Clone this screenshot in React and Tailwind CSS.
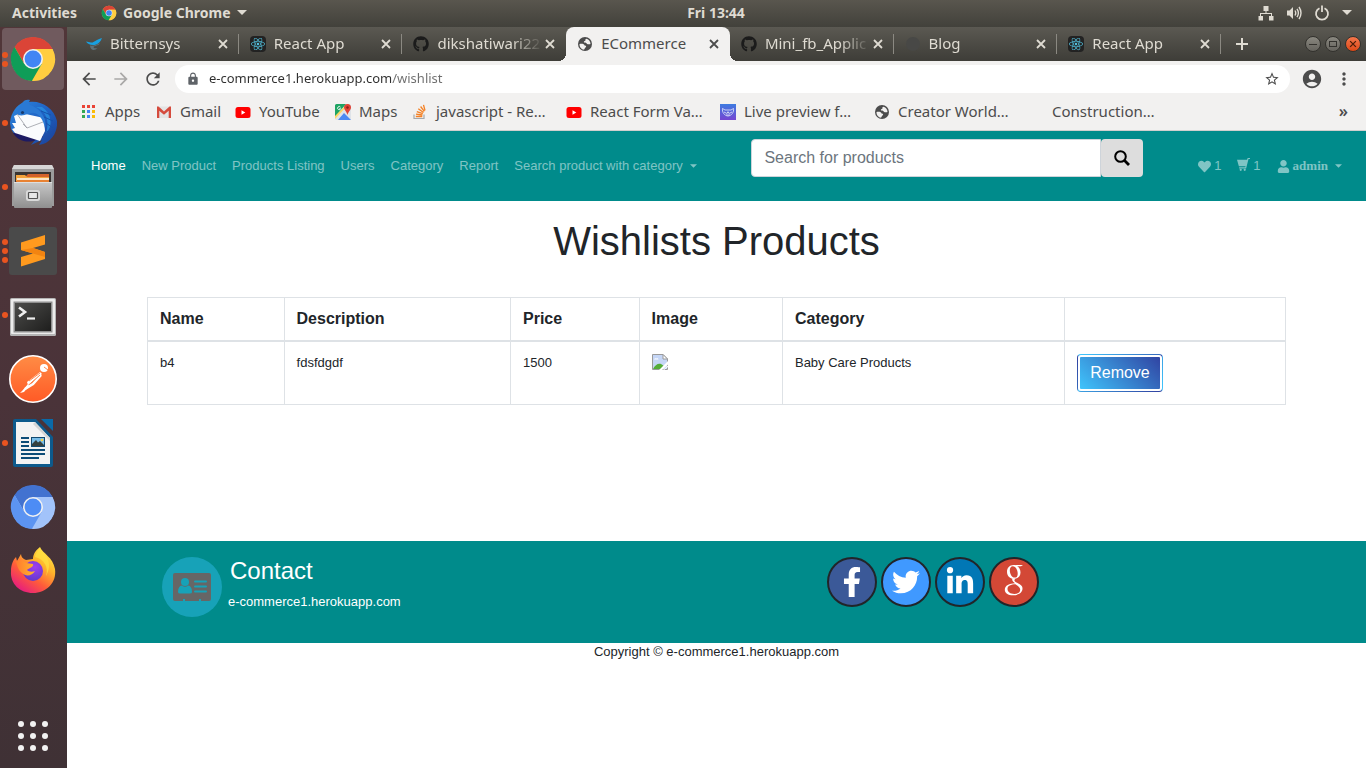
import React from "react";
import { FaFacebookF, FaTwitter, FaLinkedinIn, FaGithub, FaReact, FaHeart, FaUser } from "react-icons/fa";
import {
  MdArrowBack,
  MdArrowForward,
  MdRefresh,
  MdLock,
  MdStarBorder,
  MdAccountCircle,
  MdMoreVert,
} from "react-icons/md";

/* ---------- Logos ---------- */

function ChromeLogo({ className, top = "#db4437", right = "#ffcd40", left = "#0f9d58", core = "#4285f4" }) {
  const blade = "M9.8-5A11 11 0 0 0-9.23-5.99L-4.33 2.5L0-5Z";
  return (
    <svg viewBox="-12 -12 24 24" className={className} aria-hidden="true">
      <circle r="10.8" fill={right} />
      <path d={blade} fill={top} />
      <path d={blade} fill={right} transform="rotate(120)" />
      <path d={blade} fill={left} transform="rotate(240)" />
      <circle r="5" fill="#f1f1f1" />
      <circle r="4.2" fill={core} />
    </svg>
  );
}

function Thunderbird() {
  return (
    <svg viewBox="0 0 48 48" className="size-12" aria-hidden="true">
      <defs>
        <linearGradient id="tb" x1="0" y1="0" x2="1" y2="1">
          <stop offset="0" stopColor="#2f8be0" />
          <stop offset="0.5" stopColor="#1f62c4" />
          <stop offset="1" stopColor="#1a3f96" />
        </linearGradient>
      </defs>
      <path d="M1 24C2 12 9 6 13 4C15 1 18 0 21 1L20 3C32 1 45 9 48 22C49 32 43 42 34 45L30 46L33 41L22 46L26 41C15 42 5 37 2 30Z" fill="url(#tb)" />
      <path d="M4 34C8 41 18 45 27 41L34 38L30 30Z" fill="#1d1a63" />
      <path d="M5 17L12 14L35 19L36 32L31 42L6 34L3 30L6 29L3 24L7 24Z" fill="#fafbfd" />
      <path d="M8 15L18 29L34 23M18 29L14 25" fill="none" stroke="#9a9da5" strokeWidth="0.8" />
      <path d="M13 4C10 8 10 13 9 16C16 18 20 13 25 14C30 15 34 20 36 29C38 23 34 13 27 9C21 5 19 6 20 3Z" fill="#2a79d4" />
      <path d="M27 8C37 12 41 22 37 34C45 27 42 14 33 8Z" fill="#2a9be8" opacity="0.6" />
      <path d="M32 12L42 16M35 18L44 22M37 24L44 29M36 31L42 35" stroke="#1552aa" strokeWidth="1" />
      <circle cx="13.500" cy="13.500" r="1.600" fill="#173a6e" />
    </svg>
  );
}

function FilesIcon() {
  return (
    <svg viewBox="0 0 48 48" className="size-12" aria-hidden="true">
      <defs>
        <linearGradient id="fi" x1="0" y1="0" x2="0" y2="1">
          <stop offset="0" stopColor="#c8c8c8" />
          <stop offset="1" stopColor="#8f8f8f" />
        </linearGradient>
      </defs>
      <path d="M5 2h38l2 4v37H3V6Z" fill="#9c9c9c" />
      <path d="M5 2h38l2 4H3Z" fill="#d6d6d6" />
      <rect x="6" y="9" width="36" height="11" fill="#3a3431" />
      <path d="M7 13h10l2-2h21v8H7Z" fill="#d3622b" />
      <path d="M7 12h9l2 2h22v4H7Z" fill="#f4a33b" />
      <path d="M8 15h32v3H8Z" fill="#fce4c5" />
      <path d="M8 17h32v3H8Z" fill="#e88233" />
      <rect x="5" y="19" width="38" height="26" rx="1" fill="url(#fi)" />
      <path d="M5 19.500h38" stroke="#dedede" />
      <rect x="17" y="27" width="14" height="11" rx="2.500" fill="#dadada" />
      <rect x="19.500" y="29.500" width="9" height="6" rx="0.500" fill="#e8e8e8" stroke="#555" strokeWidth="1.200" />
    </svg>
  );
}

function SublimeIcon() {
  return (
    <svg viewBox="0 0 48 48" className="size-12" aria-hidden="true">
      <rect width="48" height="48" rx="3" fill="#4a4a4a" />
      <path d="M36 8V17.500L24 21L36 25V32L12 39.500V30L24 26.500L12 23V15.500Z" fill="#ff9a1e" />
      <path d="M12 23L24 21L36 25L36 30L24 26.500Z" fill="#f28411" />
    </svg>
  );
}

function TerminalIcon() {
  return (
    <svg viewBox="0 -2 48 48" className="size-12" aria-hidden="true">
      <defs>
        <linearGradient id="term" x1="0" y1="0" x2="1" y2="1">
          <stop offset="0" stopColor="#4c4c4a" />
          <stop offset="1" stopColor="#1e1e1d" />
        </linearGradient>
      </defs>
      <rect x="1" y="5" width="46" height="38" rx="1.500" fill="#b4b4b4" />
      <rect x="2" y="6" width="44" height="35" rx="1" fill="#ececec" />
      <rect x="4.500" y="8.500" width="39" height="31" fill="#8e8e8e" />
      <rect x="6" y="10" width="36" height="28" fill="url(#term)" />
      <path d="M10 14.500l6 4.500l-6 4.500" fill="none" stroke="#eee" strokeWidth="2.600" />
      <path d="M18 25.500h8" stroke="#eee" strokeWidth="2.200" />
    </svg>
  );
}

function PostmanIcon() {
  return (
    <svg viewBox="0 0 48 48" className="size-12" aria-hidden="true">
      <defs>
        <linearGradient id="pm" x1="0" y1="0" x2="0" y2="1">
          <stop offset="0" stopColor="#ff8c45" />
          <stop offset="1" stopColor="#ff5a26" />
        </linearGradient>
      </defs>
      <circle cx="24" cy="24" r="23.200" fill="url(#pm)" stroke="#fff" strokeWidth="1.600" />
      <circle cx="35" cy="13" r="4" fill="#fff" />
      <path d="M31 17L18 27L19 30L33 19Z" fill="#fff" />
      <path d="M32 20L24 29L16 34" fill="none" stroke="#fff" strokeWidth="2.600" />
      <path d="M19 29L13 36L11 38L15 37L20 31" fill="#fff" />
      <path d="M20 26L31 18M22 28L31 20M35 12l4 3" stroke="#ff7a3a" strokeWidth="0.900" />
    </svg>
  );
}

function WriterIcon() {
  return (
    <svg viewBox="0 0 48 48" className="size-12" aria-hidden="true">
      <path d="M6 0H27L44 18V46a2 2 0 0 1-2 2H6a2 2 0 0 1-2-2V2a2 2 0 0 1 2-2Z" fill="#0d5a8c" />
      <path d="M32 0H44V12Z" fill="#0a6aa8" />
      <path d="M7 3H26L41 19V45H7Z" fill="#f3f3f3" />
      <path d="M26 3L41 19V22L24 5Z" fill="#d4d4d4" />
      <path d="M12 19h8M12 23h8M12 27h8M12 31h24M12 35h24M12 39h18" stroke="#0c4c77" strokeWidth="1.900" />
      <rect x="22.500" y="18.500" width="13" height="9" fill="#79bde8" stroke="#124a70" />
      <path d="M23 27v-2l4-4l2 2.500l2-1.500l4 4v1Z" fill="#34403f" />
      <circle cx="33" cy="21" r="1.300" fill="#f5cf45" />
    </svg>
  );
}

function FirefoxIcon() {
  return (
    <svg viewBox="0 0 48 48" className="size-12" aria-hidden="true">
      <defs>
        <linearGradient id="ff1" x1="0.9" y1="0" x2="0.2" y2="1">
          <stop offset="0" stopColor="#fff44f" />
          <stop offset="0.350" stopColor="#ffb52b" />
          <stop offset="0.650" stopColor="#ff5b3a" />
          <stop offset="1" stopColor="#e31587" />
        </linearGradient>
        <radialGradient id="ff2" cx="0.6" cy="0.3" r="0.8">
          <stop offset="0" stopColor="#a03ff0" />
          <stop offset="1" stopColor="#5a38c8" />
        </radialGradient>
        <linearGradient id="ff3" x1="0" y1="0" x2="1" y2="0">
          <stop offset="0" stopColor="#ff7a30" />
          <stop offset="1" stopColor="#ffb52b" />
        </linearGradient>
      </defs>
      <path d="M31 0C34 7 44 10 46 22C48 36 37 46 24 46C11 46 1 37 2 24C2 18 4 13 7 10L8 14L12 7C12 10 14 12 17 13L24 12C24 7 27 3 31 0Z" fill="url(#ff1)" />
      <circle cx="24" cy="24" r="10" fill="url(#ff2)" />
      <path d="M7 14C12 12 15 14 17 16L24 17C25 20 20 21 18 23C20 25 23 25 26 24C23 29 17 30 13 26C9 23 8 18 7 14Z" fill="url(#ff3)" />
      <path d="M26 10C35 12 40 20 37 29C40 24 42 16 37 9L31 2C28 5 26 7 26 10Z" fill="#ffe141" opacity="0.700" />
    </svg>
  );
}

function AppsGridIcon() {
  return (
    <svg viewBox="0 0 48 48" className="size-12" fill="#f2f2f2" aria-hidden="true">
      {[12, 24, 36].map((y) => [12, 24, 36].map((x) => <circle key={x + "-" + y} cx={x} cy={y} r="3" />))}
    </svg>
  );
}

function BitternsysIcon() {
  return (
    <svg viewBox="0 0 16 16" className="size-4" aria-hidden="true">
      <path d="M0 5.500L5 6.500C8 7 9 4 16 2C14.500 6 12 8.500 8.500 9C4.500 9.500 1.500 8 0 5.500Z" fill="#18a0e0" />
      <path d="M4 9.500C7 10 11 9 14 7C13 9.500 10 9.500 8 10.500C6.500 11.500 9 13 11.500 12C8.500 15.500 4 14 4 9.500Z" fill="#5d7078" />
    </svg>
  );
}

function ReactFavicon() {
  return (
    <span className="flex size-4 items-center justify-center rounded-sm bg-[#222]">
      <FaReact className="size-3.5 text-[#53c1de]" aria-hidden="true" />
    </span>
  );
}

function GlobeIcon({ className }) {
  return (
    <svg viewBox="0 0 16 16" className={className} aria-hidden="true">
      <circle cx="8" cy="8" r="7" fill="currentColor" />
      <path d="M2.500 8C5 7.500 7.500 8 7.500 9.500C8.500 9.500 9.500 10 9 11C8 11.300 8 12.500 7 13.800C4.500 13.500 2.300 11 2.500 8Z" fill="#f2f1f0" />
      <path d="M9.500 2.700C8.500 3 8 4 8.500 4.800C7.500 5 6.500 5.500 7 6.500C8.500 6.300 9.500 6.800 10 8C11 8.300 12.500 8.500 13.500 8C13.500 5.500 12 3.300 9.500 2.700Z" fill="#f2f1f0" />
    </svg>
  );
}

function GmailIcon() {
  return (
    <svg viewBox="0 0 16 16" className="size-4" aria-hidden="true">
      <rect x="1" y="2.500" width="14" height="11.500" rx="1" fill="#e4e4e4" />
      <path d="M1 14V2.500H2.500L8 7.500L13.500 2.500H15V14h-2.300V6.800L8 10.800L3.300 6.800V14Z" fill="#d54b3d" />
    </svg>
  );
}

function YoutubeIcon() {
  return (
    <svg viewBox="0 0 16 16" className="size-4" aria-hidden="true">
      <rect x="0.500" y="3" width="15" height="11" rx="2.500" fill="#f00" />
      <path d="M6.500 6.300v4.400L10.300 8.500Z" fill="#fff" />
    </svg>
  );
}

function MapsIcon() {
  return (
    <svg viewBox="0 0 16 16" className="size-4" aria-hidden="true">
      <rect width="16" height="16" rx="1.500" fill="#dfe3e8" />
      <path d="M0 1.500A1.500 1.500 0 0 1 1.500 0H11L0 13Z" fill="#1fa463" />
      <path d="M3 16L9 9L16 16Z" fill="#4a89f3" />
      <path d="M0 12L12 0H14L0 15Z" fill="#fdd663" />
      <path d="M12.500 0A3.500 3.500 0 0 1 16 3.500C16 6 13 8 12.500 11C12 8 9 6 9 3.500A3.500 3.500 0 0 1 12.500 0Z" fill="#e04335" />
      <circle cx="12.500" cy="3.500" r="1.200" fill="#8c2018" />
      <path d="M5.500 3.200A1.600 1.600 0 1 0 5.700 4.700H4.300" fill="none" stroke="#fff" strokeWidth="0.900" />
    </svg>
  );
}

function StackIcon() {
  return (
    <svg viewBox="0 0 16 16" className="size-4" fill="none" aria-hidden="true">
      <path d="M2 10.500V14.500H12V10.500" stroke="#a5a8ab" strokeWidth="1.200" />
      <path d="M3.800 12.500H10.300M4 10.200L10.400 11M4.800 7.600L10.800 9.700M6.300 4.800L11.500 8.500M8.600 2.500L12.300 7.400M11.500 0.800L13 6.500" stroke="#f48024" strokeWidth="1.300" />
    </svg>
  );
}

function PreviewIcon() {
  return (
    <svg viewBox="0 0 16 16" className="size-4" aria-hidden="true">
      <defs>
        <linearGradient id="pv" x1="0" y1="0" x2="0" y2="1">
          <stop offset="0" stopColor="#3e7be0" />
          <stop offset="1" stopColor="#7546d2" />
        </linearGradient>
      </defs>
      <rect width="16" height="16" fill="url(#pv)" />
      <path d="M2.500 4.500L5 6H11L13.500 4.500C14 8 12 11.500 8 12C4 11.500 2 8 2.500 4.500ZM4 8l3 1.500M12 8L9 9.500M6 11h4" fill="none" stroke="#d7def8" strokeWidth="0.900" />
      <circle cx="8" cy="8.500" r="1" fill="#d7def8" />
    </svg>
  );
}

function AppsIcon() {
  const colors = ["#ea4335", "#ea4335", "#ea4335", "#34a853", "#4285f4", "#fbbc05", "#34a853", "#4285f4", "#fbbc05"];
  return (
    <svg viewBox="0 0 16 16" className="size-4" aria-hidden="true">
      {colors.map((c, i) => (
        <rect key={i} x={1 + (i % 3) * 5} y={1 + Math.floor(i / 3) * 5} width="3" height="3" fill={c} />
      ))}
    </svg>
  );
}

function CrossIcon({ className }) {
  return (
    <svg viewBox="0 0 14 14" className={className} fill="none" stroke="currentColor" strokeWidth="1.8" aria-hidden="true">
      <path d="M3 3L11 11M11 3L3 11" />
    </svg>
  );
}

/* ---------- Desktop ---------- */

function Caret({ className }) {
  return (
    <svg viewBox="0 0 10 5" className={className} fill="currentColor" aria-hidden="true">
      <path d="M0 0h10L5 5Z" />
    </svg>
  );
}

function TopBar() {
  return (
    <header className="grid h-[27px] grid-cols-[1fr_auto_1fr] items-center bg-linear-to-b from-[#59564e] to-[#42413b] pr-3.5 pb-0.5 pl-3 text-sm font-bold text-[#dfdbd2]">
      <div className="flex items-center gap-6">
        <button type="button">Activities</button>
        <button type="button" className="flex items-center gap-1.5">
          <ChromeLogo className="size-4" />
          Google Chrome
          <Caret className="h-[5px] w-2.5" />
        </button>
      </div>
      <button type="button" className="pl-[68px]">Fri 13:44</button>
      <div className="flex items-center justify-end gap-3">
        <svg viewBox="0 0 16 16" className="size-4" fill="currentColor" aria-label="Network">
          <path d="M5.500 1h5v5h-2v2h5.500v3h1.500v4.500H11V11h2V9H3v2h2v4.500H.5V11H2V8h5.500V6h-2Z" />
        </svg>
        <svg viewBox="0 0 16 16" className="size-4" aria-label="Volume">
          <path d="M1 5.500h2.500L7 2v12L3.500 10.500H1Z" fill="currentColor" />
          <path d="M9 5.500q1.500 2.500 0 5M11 3.800q2.800 4.200 0 8.400M13 2q4 6 0 12" fill="none" stroke="currentColor" strokeWidth="1.400" />
        </svg>
        <svg viewBox="0 0 16 16" className="size-4" fill="none" stroke="currentColor" strokeWidth="1.800" aria-label="Power">
          <path d="M5.500 3.200a6 6 0 1 0 5 0M8 .5v6.500" />
        </svg>
        <Caret className="h-[5px] w-2.5" />
      </div>
    </header>
  );
}

const dockApps = [
  { name: "Google Chrome", dots: 2, active: true, icon: <ChromeLogo className="size-12" /> },
  { name: "Thunderbird Mail", dots: 1, icon: <Thunderbird /> },
  { name: "Files", dots: 1, icon: <FilesIcon /> },
  { name: "Sublime Text", dots: 3, icon: <SublimeIcon /> },
  { name: "Terminal", dots: 1, icon: <TerminalIcon /> },
  { name: "Postman", dots: 0, icon: <PostmanIcon /> },
  { name: "LibreOffice Writer", dots: 1, icon: <WriterIcon /> },
  {
    name: "Chromium",
    dots: 0,
    icon: <ChromeLogo className="size-12" top="#4272d0" right="#a2c3fa" left="#5c94f2" core="#4d8cf5" />,
  },
  { name: "Firefox", dots: 0, icon: <FirefoxIcon /> },
];

function Dock() {
  return (
    <aside className="flex w-[67px] shrink-0 flex-col bg-linear-to-b from-[#513639] via-[#4a3339] to-[#3f3135]">
      {dockApps.map((app) => (
        <div key={app.name} className="flex h-16 items-center">
          <button
            type="button"
            aria-label={app.name}
            className={
              app.active
                ? "relative ml-0.5 flex size-[62px] items-center justify-center rounded bg-[#705a5e]"
                : "relative ml-0.5 flex size-[62px] items-center justify-center"
            }
          >
            {app.icon}
            <span className="absolute inset-y-0 left-0 flex flex-col justify-center gap-[3px]">
              {Array.from({ length: app.dots }, (_, i) => (
                <span key={i} className="size-[6px] rounded-full bg-[#e95420]" />
              ))}
            </span>
          </button>
        </div>
      ))}
      <div className="mt-auto flex h-16 items-center">
        <button type="button" aria-label="Show Applications" className="ml-0.5 flex size-[62px] items-center justify-center">
          <AppsGridIcon />
        </button>
      </div>
    </aside>
  );
}

/* ---------- Browser ---------- */

const tabs = [
  { title: "Bitternsys", icon: <BitternsysIcon /> },
  { title: "React App", icon: <ReactFavicon /> },
  { title: "dikshatiwari22", beforeActive: true, icon: <FaGithub className="size-4 text-[#1b1b1b]" /> },
  { title: "ECommerce", active: true, icon: <GlobeIcon className="size-4 text-[#4c4c4c]" /> },
  { title: "Mini_fb_Applic", icon: <FaGithub className="size-4 text-[#1b1b1b]" /> },
  { title: "Blog", icon: <span className="size-3.5 rounded-full bg-[#484846]" /> },
  { title: "React App", icon: <ReactFavicon /> },
];

const tabBase = "flex min-w-0 flex-1 items-center border-r pr-2 pl-[11px]";
const activeTab =
  "relative h-[34px] rounded-t-lg border-transparent bg-[#f2f1f0] text-[#4c4c4c] before:absolute before:bottom-0 before:-left-2 before:size-2 before:bg-radial-[circle_at_0_0] before:from-transparent before:from-[8px] before:to-[#f2f1f0] before:to-[8px] after:absolute after:-right-[9px] after:bottom-0 after:size-2 after:bg-radial-[circle_at_100%_0] after:from-transparent after:from-[8px] after:to-[#f2f1f0] after:to-[8px]";

const windowButton = "flex size-4 items-center justify-center rounded-full border border-[#33322e] bg-linear-to-b";

function TabStrip() {
  return (
    <div className="flex h-[34px] items-center bg-linear-to-b from-[#5b5952] to-[#3e3d38] pr-[5px] pl-2 text-[15px] text-[#dfdbd2]">
      <div role="tablist" className="flex w-[1146px] items-center">
        {tabs.map((tab, i) => (
          <div
            key={i}
            className={`${tabBase} ${tab.active ? activeTab : tab.beforeActive ? "h-5 border-transparent" : "h-5 border-[#8b8982]"}`}
          >
            <button type="button" role="tab" aria-selected={!!tab.active} className="flex min-w-0 flex-1 items-center gap-2">
              <span className="flex size-4 shrink-0 items-center justify-center">{tab.icon}</span>
              <span
                className={
                  tab.active
                    ? "flex-1 overflow-hidden pb-0.5 text-left whitespace-nowrap"
                    : "flex-1 overflow-hidden mask-r-from-70% pb-0.5 text-left whitespace-nowrap"
                }
              >
                {tab.title}
              </span>
            </button>
            <button type="button" aria-label="Close tab" className="shrink-0">
              <CrossIcon className="size-3.5" />
            </button>
          </div>
        ))}
      </div>
      <button type="button" aria-label="New tab" className="ml-3">
        <svg viewBox="0 0 18 18" className="size-[18px]" fill="none" stroke="currentColor" strokeWidth="2" aria-hidden="true">
          <path d="M9 3V15M3 9H15" />
        </svg>
      </button>
      <div className="ml-auto flex gap-1">
        <button type="button" aria-label="Minimize" className={`${windowButton} from-[#8a8880] to-[#65635d]`}>
          <span className="h-px w-2 bg-[#33322e]" />
        </button>
        <button type="button" aria-label="Maximize" className={`${windowButton} from-[#8a8880] to-[#65635d]`}>
          <span className="h-1.5 w-2 border border-[#33322e]" />
        </button>
        <button type="button" aria-label="Close window" className={`${windowButton} from-[#f4764a] to-[#dd4814] text-[#4a1c08]`}>
          <CrossIcon className="size-2.5" />
        </button>
      </div>
    </div>
  );
}

function Toolbar() {
  return (
    <div className="flex h-9 items-center bg-[#f2f1f0] pr-3 pl-3 text-[#4c4c4c]">
      <div className="flex items-center gap-3">
        <button type="button" aria-label="Back"><MdArrowBack className="size-5" /></button>
        <button type="button" aria-label="Forward"><MdArrowForward className="size-5 text-[#a9a8a7]" /></button>
        <button type="button" aria-label="Reload"><MdRefresh className="size-5" /></button>
      </div>
      <div className="ml-3 flex h-7 flex-1 items-center gap-[9px] rounded-full bg-white pr-2.5 pl-[11px]">
        <MdLock className="size-3.5 shrink-0 text-[#5f6368]" />
        <input
          aria-label="Address"
          defaultValue="e-commerce1.herokuapp.com/wishlist"
          className="min-w-0 flex-1 bg-linear-to-r from-[#2e2e2e] from-[182px] to-[#6d6d6d] to-[182px] bg-clip-text text-[13px] text-transparent outline-none"
        />
        <button type="button" aria-label="Bookmark this page"><MdStarBorder className="size-4" /></button>
      </div>
      <button type="button" aria-label="Profile" className="ml-[11px]"><MdAccountCircle className="size-[22px]" /></button>
      <button type="button" aria-label="Menu" className="ml-[11px]"><MdMoreVert className="size-5" /></button>
    </div>
  );
}

const bookmarks = [
  { label: "Apps", width: "w-[75px]", icon: <AppsIcon /> },
  { label: "Gmail", width: "w-[79px]", icon: <GmailIcon /> },
  { label: "YouTube", width: "w-[100px]", icon: <YoutubeIcon /> },
  { label: "Maps", width: "w-[77px]", icon: <MapsIcon /> },
  { label: "javascript - Re…", width: "w-[154px]", icon: <StackIcon /> },
  { label: "React Form Va…", width: "w-[154px]", icon: <YoutubeIcon /> },
  { label: "Live preview f…", width: "w-[154px]", icon: <PreviewIcon /> },
  { label: "Creator World…", width: "w-[154px]", icon: <GlobeIcon className="size-4 text-[#4c4c4c]" /> },
  { label: "Construction…", width: "w-[154px]", icon: null },
];

function BookmarksBar() {
  return (
    <nav aria-label="Bookmarks" className="flex h-[34px] items-center border-b border-[#d0cfce] bg-[#f2f1f0] pr-[18px] pb-1 pl-3.5 text-[15px] text-[#4c4c4c]">
      {bookmarks.map((b) => (
        <a key={b.label} href="#" className={`${b.width} flex shrink-0 items-center gap-2 whitespace-nowrap`}>
          <span className="size-4 shrink-0">{b.icon}</span>
          {b.label}
        </a>
      ))}
      <button type="button" aria-label="More bookmarks" className="ml-auto pb-0.5 text-base leading-none font-semibold">»</button>
    </nav>
  );
}

/* ---------- Shop page ---------- */

const navLinks = ["Home", "New Product", "Products Listing", "Users", "Category", "Report"];

function DropCaret() {
  return (
    <svg viewBox="0 0 8 4" className="ml-[7px] h-1 w-[7px]" fill="currentColor" aria-hidden="true">
      <path d="M0 0h8L4 4Z" />
    </svg>
  );
}

function SiteNav() {
  return (
    <nav className="flex h-[70px] items-center justify-between bg-[#008b8b] px-6 text-[13px] whitespace-nowrap text-white/50">
      <ul className="flex gap-4">
        {navLinks.map((label, i) => (
          <li key={label}>
            <a href="#" className={i === 0 ? "text-white" : ""}>{label}</a>
          </li>
        ))}
        <li>
          <button type="button" className="flex items-center">Search product with category<DropCaret /></button>
        </li>
      </ul>
      <form className="mt-2 flex self-start" onSubmit={(e) => e.preventDefault()}>
        <input
          type="text"
          aria-label="Search for products"
          placeholder="Search for products"
          className="h-[38px] w-[350px] rounded-l border border-[#ced4da] bg-white px-3 text-base text-[#495057] outline-none placeholder:text-[#6c757d]"
        />
        <button type="submit" aria-label="Search" className="flex w-[42px] items-center justify-center rounded bg-[#ddd] text-black">
          <svg viewBox="0 0 16 16" className="size-4" fill="none" stroke="currentColor" aria-hidden="true">
            <circle cx="6.500" cy="6.500" r="5.300" strokeWidth="2" />
            <path d="M10.300 10.300l4.700 4.700" strokeWidth="2.800" />
          </svg>
        </button>
      </form>
      <ul className="flex items-center gap-4">
        <li>
          <a href="#" className="flex items-center gap-[3px]"><FaHeart className="size-[13px]" />1</a>
        </li>
        <li>
          <a href="#" className="flex items-center gap-[3px]">
            <svg viewBox="0 0 14 14" className="-mt-1 size-[13px]" fill="currentColor" aria-hidden="true">
              <path d="M0 2H10.800L11.500 0H14V1.200H12.400L9.800 11.200H2.300V10H8.900L9.200 8.800H2Z" />
              <circle cx="4" cy="12.700" r="1.200" />
              <circle cx="8.300" cy="12.700" r="1.200" />
            </svg>
            1
          </a>
        </li>
        <li>
          <button type="button" className="flex items-center font-['Liberation_Serif',serif] font-bold">
            <FaUser className="mr-[3px] size-[13px]" />
            admin
            <DropCaret />
          </button>
        </li>
      </ul>
    </nav>
  );
}

function BrokenImage() {
  return (
    <svg viewBox="0 0 16 16" className="size-4" role="img" aria-label="Product">
      <path d="M.5.500H11L15.500 5V15.500H.5Z" fill="#c5d6f6" stroke="#9a9a9a" />
      <path d="M11 .5V5h4.500Z" fill="#fff" stroke="#9a9a9a" />
      <path d="M2 5.500q1-2 2.500-1q1.500-1 2 1Z" fill="#fff" />
      <path d="M1 15C3 11 6 9 9 10L12 12L9 15Z" fill="#54ad38" />
      <path d="M16 7L7 16H10L16 10.500ZM16 11.500L11 16H12L16 13Z" fill="#fff" />
    </svg>
  );
}

const cell = "border border-[#dee2e6] p-3 align-top";
const head = "border border-b-2 border-[#dee2e6] p-3 text-left font-bold";

function WishlistTable() {
  return (
    <table className="w-full table-fixed border-collapse text-[13px] leading-[18px]">
      <thead>
        <tr className="text-base leading-[18px]">
          <th className={`${head} w-[12%]`}>Name</th>
          <th className={`${head} w-[19.9%]`}>Description</th>
          <th className={`${head} w-[11.3%]`}>Price</th>
          <th className={`${head} w-[12.6%]`}>Image</th>
          <th className={`${head} w-[24.8%]`}>Category</th>
          <th className={head} aria-label="Actions" />
        </tr>
      </thead>
      <tbody>
        <tr>
          <td className={cell}>b4</td>
          <td className={cell}>fdsfdgdf</td>
          <td className={cell}>1500</td>
          <td className={cell}><BrokenImage /></td>
          <td className={cell}>Baby Care Products</td>
          <td className={cell}>
            <button
              type="button"
              className="block h-[38px] rounded border border-transparent bg-linear-45/srgb from-[#40c9ff] to-[#303f9f] px-3 text-base text-white shadow-[inset_0_0_0_2px_#fff]"
            >
              Remove
            </button>
          </td>
        </tr>
      </tbody>
    </table>
  );
}

function GoogleG() {
  return (
    <svg viewBox="0 0 20 32" className="-mt-1 h-8 w-5" fill="#fff" fillRule="evenodd" aria-hidden="true">
      <path d="M9.500 1C14 1 16.500 4.500 16.500 8.500C16.500 12.500 13.500 14.800 10 14.800C5.500 14.800 3 11.500 3 7.700C3 3.800 5.800 1 9.500 1ZM8.800 2.200C6.800 2.200 5.800 4 5.800 6.300C5.800 9.800 7.700 13.600 10.700 13.600C12.700 13.600 13.700 12.200 13.700 9.700C13.700 6.500 12 2.200 8.800 2.200Z" />
      <path d="M9 1H19L17 2.300H13.500C13 2 11 1.300 9 1Z" />
      <path d="M8.500 14.300L11.500 14.600C10 16 10 17 12 18.200C15 19.800 18.500 21 18.500 24.500C18.500 28.500 14.500 31.300 9 31.300C4 31.300.8 29 .8 25.700C.8 21.500 5.500 19.300 11 19.200C9 17.700 7.500 16.300 8.500 14.300ZM11.500 20.300C7 20.300 3.500 21.800 3.500 25C3.500 28 6.300 29.900 10.300 29.900C14 29.900 16.200 28.200 16.200 25.700C16.200 23.200 14 22 11.500 20.300Z" />
    </svg>
  );
}

const social = "flex size-[50px] items-center justify-center rounded-full border-2 border-[#212529] text-white";

function SiteFooter() {
  return (
    <footer>
      <div className="h-[102px] bg-[#008b8b] px-20 pt-4 text-white">
        <div className="grid grid-cols-2">
          <div className="flex gap-1.5 pl-[15px]">
            <span className="flex size-[60px] items-center justify-center rounded-full bg-[#17a2b8]">
              <svg viewBox="0 0 38 28" className="h-7 w-[38px]" aria-hidden="true">
                <path d="M2 0H36A2 2 0 0 1 38 2V26A2 2 0 0 1 36 28H28V26H26V28H12V26H10V28H2A2 2 0 0 1 0 26V2A2 2 0 0 1 2 0Z" fill="#666" />
                <circle cx="12" cy="9" r="4" fill="#17a2b8" />
                <path d="M9 12.500Q12 15 15 12.500Q19 13 19 19Q19 20.500 17 20.500H7Q5 20.500 5 19Q5 13 9 12.500Z" fill="#17a2b8" />
                <path d="M22 8.500H33M22 13.500H33M22 18.500H33" stroke="#17a2b8" strokeWidth="2" strokeLinecap="round" />
              </svg>
            </span>
            <div>
              <h2 className="pl-0.5 text-2xl leading-7">Contact</h2>
              <a href="#" className="mt-[7px] block text-[13px] leading-5">e-commerce1.herokuapp.com</a>
            </div>
          </div>
          <div className="flex gap-1 pl-[110px]">
            <a href="#" aria-label="Facebook" className={`${social} bg-[#3b5998]`}><FaFacebookF className="size-[30px]" /></a>
            <a href="#" aria-label="Twitter" className={`${social} bg-[#4099ff]`}><FaTwitter className="size-7" /></a>
            <a href="#" aria-label="LinkedIn" className={`${social} bg-[#0177b5]`}><FaLinkedinIn className="size-[30px]" /></a>
            <a href="#" aria-label="Google" className={`${social} bg-[#d34836]`}><GoogleG /></a>
          </div>
        </div>
      </div>
      <p className="text-center text-[13px] leading-[18px]">Copyright © e-commerce1.herokuapp.com</p>
    </footer>
  );
}

export default function App() {
  return (
    <div className="flex min-h-screen flex-col font-['Noto_Sans',sans-serif]">
      <TopBar />
      <div className="flex flex-1">
        <Dock />
        <div className="flex min-w-0 flex-1 flex-col">
          <TabStrip />
          <Toolbar />
          <BookmarksBar />
          <div className="flex-1 bg-white font-['Liberation_Sans',Arial,sans-serif] text-[#212529]">
            <SiteNav />
            <main className="px-20 pt-4 pb-[136px]">
              <h1 className="mb-8 text-center text-[40px] leading-12">Wishlists Products</h1>
              <WishlistTable />
            </main>
            <SiteFooter />
          </div>
        </div>
      </div>
    </div>
  );
}
